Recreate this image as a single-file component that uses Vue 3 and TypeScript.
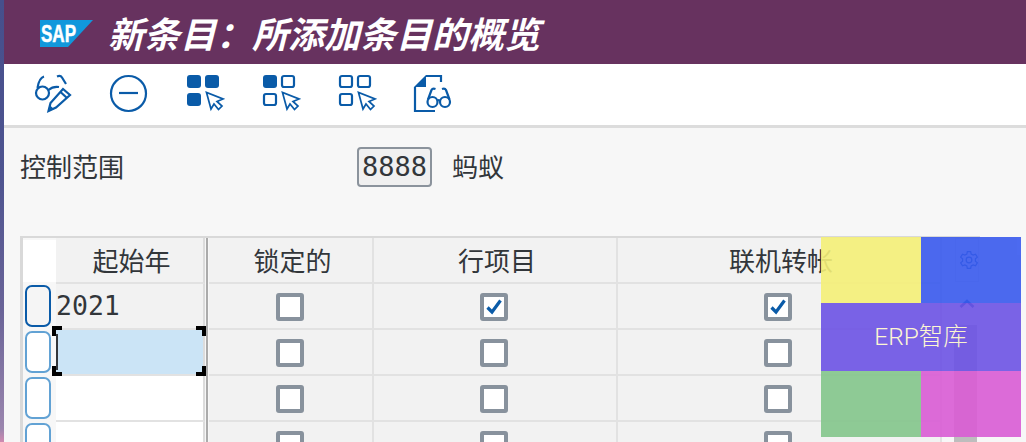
<script setup lang="ts">
const rows = [
  { year: '2021', locked: false, item: true, online: true, kind: 'filled' },
  { year: '', locked: false, item: false, online: false, kind: 'active' },
  { year: '', locked: false, item: false, online: false, kind: 'empty' },
  { year: '', locked: false, item: false, online: false, kind: 'empty' },
]
</script>

<template>
  <div class="page">
    <div class="strip"></div>
    <div class="main">
      <header class="title-bar">
        <svg class="logo" width="54" height="27" viewBox="0 0 54 27">
          <polygon points="0,0 53,0 28,27 0,27" fill="#1198dc" />
          <text x="1" y="21.5" textLength="35" lengthAdjust="spacingAndGlyphs" class="logo-text">SAP</text>
        </svg>
        <h1>新条目：所添加条目的概览</h1>
      </header>

      <nav class="toolbar">
        <svg class="tool" viewBox="0 0 40 40">
          <circle cx="9.5" cy="19" r="6.5" />
          <path d="M4.5 14 Q6 4 11 2.5" />
          <path d="M15.5 16 Q20 12 26 13" />
          <path d="M24 2.5 Q27.5 1 29 3.5 L33 10" />
          <path d="M15.5 37 L17.5 29 L30 15 L37 21 L23 33.5 Z" />
          <path d="M27.5 18 L34 24" />
          <path d="M15 37.5 L16.5 31 L21 35 Z" class="solid" />
        </svg>
        <svg class="tool" viewBox="0 0 40 40">
          <circle cx="19.5" cy="19.5" r="17.5" />
          <path d="M10 19 H29" />
        </svg>
        <svg class="tool" viewBox="0 0 40 40">
          <rect x="2" y="1" width="14" height="13" rx="3" class="solid" />
          <rect x="20" y="1" width="14" height="13" rx="3" class="solid" />
          <rect x="2" y="19" width="14" height="13" rx="3" class="solid" />
          <path d="M21.5 18.5 L26 35 L29 30 L33.5 35.5 L37 32 L32 27.5 L38 25 Z" class="thin" />
        </svg>
        <svg class="tool" viewBox="0 0 40 40">
          <rect x="2" y="1" width="14" height="13" rx="3" class="solid" />
          <rect x="21" y="2" width="12" height="11" rx="2" />
          <rect x="3" y="20" width="12" height="11" rx="2" />
          <path d="M21.5 18.5 L26 35 L29 30 L33.5 35.5 L37 32 L32 27.5 L38 25 Z" class="thin" />
        </svg>
        <svg class="tool" viewBox="0 0 40 40">
          <rect x="3" y="2" width="12" height="11" rx="2" />
          <rect x="21" y="2" width="12" height="11" rx="2" />
          <rect x="3" y="20" width="12" height="11" rx="2" />
          <path d="M21.5 18.5 L26 35 L29 30 L33.5 35.5 L37 32 L32 27.5 L38 25 Z" class="thin" />
        </svg>
        <svg class="tool" viewBox="0 0 40 40">
          <path d="M13 2 H28 V8" />
          <path d="M2 13 V37 H22" />
          <path d="M1 13 L13 1 V13 Z" class="solid" />
          <circle cx="19.5" cy="28" r="5" />
          <circle cx="32" cy="28" r="5" />
          <path d="M24.5 27 Q25.7 25 27 27" />
          <path d="M15 25.5 L18.5 16 Q19.5 14 22.5 15" />
          <path d="M36.5 25.5 L33 16 Q32 14 29 15" />
        </svg>
      </nav>

      <section class="content">
        <div class="field">
          <span class="field-label">控制范围</span>
          <span class="field-value">8888</span>
          <span class="field-text">蚂蚁</span>
        </div>

        <div class="table">
          <div class="corner"></div>
          <div class="head first">起始年</div>
          <div class="head">锁定的</div>
          <div class="head">行项目</div>
          <div class="head">联机转帐</div>
          <div class="side">
            <div class="gear-box">
              <svg width="20" height="20" viewBox="0 0 24 24">
                <circle cx="12" cy="12" r="3.4" />
                <path d="M10 2 H14 L14.6 5 L17 6.2 L19.8 5 L22 8.6 L19.7 10.6 V13.4 L22 15.4 L19.8 19 L17 17.8 L14.6 19 L14 22 H10 L9.4 19 L7 17.8 L4.2 19 L2 15.4 L4.3 13.4 V10.6 L2 8.6 L4.2 5 L7 6.2 L9.4 5 Z" />
              </svg>
            </div>
            <svg class="chevron" width="16" height="10" viewBox="0 0 16 10">
              <path d="M1.5 8 L8 2 L14.5 8" />
            </svg>
            <div class="thumb"></div>
          </div>

          <template v-for="(row, i) in rows" :key="i">
            <div class="sel-cell"><span class="sel" :class="{ on: i === 0 }"></span></div>
            <div class="cell first year" :class="row.kind">
              {{ row.year }}
              <template v-if="row.kind === 'active'">
                <i class="caret"></i>
                <i class="mark tl"></i><i class="mark tr"></i><i class="mark bl"></i><i class="mark br"></i>
              </template>
            </div>
            <div class="cell" v-for="val in [row.locked, row.item, row.online]">
              <span class="box">
                <svg v-if="val" width="20" height="20" viewBox="0 0 20 20">
                  <path d="M3.5 10.5 L8 15 L16.5 3.5" />
                </svg>
              </span>
            </div>
          </template>
        </div>
      </section>
    </div>

    <div class="mark-overlay">
      <div class="q yellow"></div>
      <div class="q blue"></div>
      <div class="band">ERP智库</div>
      <div class="q green"></div>
      <div class="q pink"></div>
    </div>
  </div>
</template>

<style>
html,
body {
  margin: 0;
  background: #f7f7f7;
}
</style>

<style scoped>
.page {
  position: relative;
  display: flex;
  width: 1026px;
  height: 442px;
  overflow: hidden;
  font-family: "Noto Sans CJK SC", "Noto Sans", sans-serif;
  color: #32363a;
}

.strip {
  width: 4px;
  flex: none;
  background: linear-gradient(#464f8c, #4e5490 40%, #6a6498 70%, #9b86ae 97%, #d08ab0);
}

.main {
  flex: 1;
  min-width: 0;
  background: #f7f7f7;
}

.title-bar {
  display: flex;
  align-items: center;
  height: 64px;
  padding-left: 36px;
  box-sizing: border-box;
  background: #67325f;
}

.logo {
  flex: none;
  margin-top: 3px;
}

.logo-text {
  font: bold 23px "Liberation Sans", sans-serif;
  fill: #fff;
  stroke: #fff;
  stroke-width: 0.5;
}

h1 {
  margin: 0 0 0 14px;
  font-size: 36px;
  line-height: 64px;
  font-weight: 700;
  font-style: italic;
  color: #fff;
  white-space: nowrap;
}

.toolbar {
  display: flex;
  gap: 36px;
  height: 61px;
  padding: 10px 0 0 29px;
  box-sizing: border-box;
  background: #fff;
}

.tool {
  width: 40px;
  height: 40px;
  fill: none;
  stroke: #0a5ba8;
  stroke-width: 2.2;
}

.tool .solid {
  fill: #0a5ba8;
  stroke: none;
}

.tool .thin {
  stroke-width: 1.7;
  fill: #fff;
}

.content {
  border-top: 3px solid #dcdcdc;
  padding: 19px 0 0 16px;
}

.field {
  display: flex;
  align-items: center;
  height: 40px;
  font-size: 26px;
}

.field-label {
  width: 337px;
  padding-bottom: 4px;
}

.field-value {
  width: 75px;
  height: 40px;
  box-sizing: border-box;
  border: 2px solid #8b939c;
  border-radius: 4px;
  background: #f0f0f0;
  font-family: "DejaVu Sans Mono", monospace;
  font-size: 27px;
  line-height: 35px;
  text-align: center;
}

.field-text {
  margin-left: 20px;
  padding-bottom: 4px;
}

.table {
  display: grid;
  grid-template-columns: 33px 153px 165px 244px 324px 38px;
  grid-template-rows: repeat(5, 46px);
  width: 960px;
  box-sizing: border-box;
  margin-top: 49px;
  border-top: 2px solid #d9d9d9;
  border-left: 3px solid #d9d9d9;
  font-size: 26px;
}

.corner {
  background: #fff;
  margin-top: 2px;
  margin-bottom: 2px;
}

.head,
.cell {
  display: flex;
  align-items: center;
  justify-content: center;
  box-sizing: border-box;
  background: #f2f2f2;
  border-bottom: 2px solid #e2e2e2;
  border-right: 2px solid #e2e2e2;
}

.cell {
  padding: 2px 2px 0 0;
}

.head {
  padding: 0 0 1px 4px;
}

.first {
  position: relative;
  width: 149px;
  border-right: 2px solid #dcdcdc;
}

.first::after {
  content: "";
  position: absolute;
  top: 0;
  bottom: -2px;
  left: 147px;
  margin-left: 3px;
  width: 2px;
  background: #ababab;
}

.year {
  justify-content: flex-start;
  padding: 0 0 1px 0;
  font-family: "DejaVu Sans Mono", monospace;
  font-size: 26.5px;
}

.year.active {
  background: #cbe4f6;
}

.year.empty {
  background: #fff;
}

.sel-cell {
  display: flex;
  align-items: center;
  justify-content: center;
  background: #f7f7f7;
}

.sel {
  display: block;
  width: 26px;
  height: 42px;
  box-sizing: border-box;
  border: 2px solid #62a2d4;
  border-radius: 7px;
  background: #fff;
  margin: 0 3px 2px 0;
}

.sel.on {
  border-color: #0a5ba8;
  background: #f5f5f5;
}

.box {
  display: flex;
  align-items: center;
  justify-content: center;
  width: 28px;
  height: 28px;
  box-sizing: border-box;
  border: 4px solid #88929d;
  border-radius: 3px;
  background: #fff;
}

.box svg {
  fill: none;
  stroke: #0a5ba8;
  stroke-width: 3.2;
}

.side {
  grid-column: 6;
  grid-row: 1 / span 5;
  display: flex;
  flex-direction: column;
  align-items: flex-start;
  height: 206px;
  overflow: hidden;
  background: #f7f7f7;
}

.gear-box {
  display: flex;
  align-items: center;
  justify-content: center;
  flex: none;
  width: 24px;
  height: 44px;
  margin-left: 13px;
  padding-left: 3px;
  border: 1px solid #e2e2e2;
  box-sizing: border-box;
}

.gear-box svg {
  flex: none;
  fill: none;
  stroke: #0a5ba8;
  stroke-width: 1.5;
}

.chevron {
  flex: none;
  margin: 17px 0 0 17px;
  fill: none;
  stroke: #0a5ba8;
  stroke-width: 2.5;
}

.thumb {
  flex: none;
  width: 23px;
  height: 200px;
  margin: 16px 0 0 12px;
  background: #bdbdbd;
}

.caret {
  position: absolute;
  left: 0;
  top: 4px;
  width: 2px;
  height: 36px;
  background: #32363a;
}

.mark {
  position: absolute;
  z-index: 1;
  width: 10px;
  height: 10px;
  box-sizing: border-box;
  border: 0 solid #000;
}

.mark.tl {
  left: -4px;
  top: -4px;
  border-width: 4px 0 0 4px;
}

.mark.tr {
  right: -3px;
  top: -4px;
  border-width: 4px 4px 0 0;
}

.mark.bl {
  left: -4px;
  bottom: -2px;
  border-width: 0 0 4px 4px;
}

.mark.br {
  right: -3px;
  bottom: -2px;
  border-width: 0 4px 4px 0;
}

.mark-overlay {
  position: absolute;
  left: 821px;
  top: 237px;
  z-index: 2;
  display: grid;
  grid-template-columns: 100px 100px;
  grid-template-rows: 66px 68px 66px;
  opacity: 0.9;
}

.yellow {
  background: #f5f078;
}

.blue {
  background: #395aee;
}

.green {
  background: #84c68c;
}

.pink {
  background: #da5cd5;
}

.band {
  grid-column: 1 / span 2;
  display: flex;
  align-items: center;
  justify-content: center;
  padding-bottom: 6px;
  background: #6d53e5;
  color: #fff8d0;
  font-family: Roboto, "Noto Sans CJK SC", sans-serif;
  font-size: 24.5px;
  font-weight: 300;
}
</style>
